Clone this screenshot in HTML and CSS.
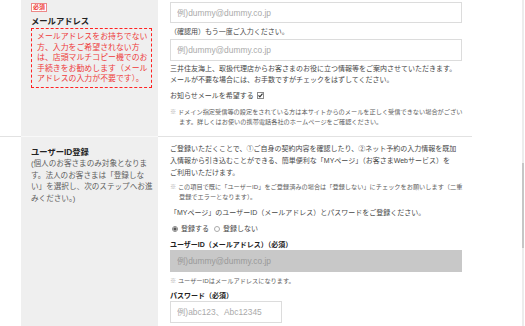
FILE: index.html
```html
<!DOCTYPE html>
<html lang="ja">
<head>
  <meta charset="UTF-8" />
  <title>お客さま情報入力</title>
  <link rel="stylesheet" href="styles.css">
</head>
<body>
  <div class="page">
    <div class="form">

      <div class="row row-mail">
        <div class="label-cell">
          <span class="badge">必須</span>
          <h2 class="label-title">メールアドレス</h2>
          <p class="alert">メールアドレスをお持ちでない<br>方、入力をご希望されない方<br>は、店頭マルチコピー機でのお<br>手続きをお勧めします（メール<br>アドレスの入力が不要です）。</p>
        </div>
        <div class="field-cell">
          <input class="text-input" type="text" placeholder="例)dummy@dummy.co.jp">
          <p class="sub-label">（確認用）もう一度ご入力ください。</p>
          <input class="text-input" type="text" placeholder="例)dummy@dummy.co.jp">
          <p class="text mail-info">三井住友海上、取扱代理店からお客さまのお役に立つ情報等をご案内させていただきます。<br>メールが不要な場合には、お手数ですがチェックをはずしてください。</p>
          <p class="text opt-in">お知らせメールを希望する
            <svg class="check" width="7" height="7" viewBox="0 0 7 7"><rect x=".5" y=".5" width="6" height="6" fill="#fff" stroke="#8a8a8a"/><path d="M1.5 3.4l1.4 1.5 2.6-3.2" fill="none" stroke="#333" stroke-width="1.2"/></svg>
          </p>
          <p class="note"><span class="mark">※</span> ドメイン指定受信等の設定をされている方は本サイトからのメールを正しく受信できない場合がござい<br>ます。詳しくはお使いの携帯電話各社のホームページをご確認ください。</p>
        </div>
      </div>

      <div class="row row-user">
        <div class="label-cell">
          <h2 class="label-title">ユーザーID登録</h2>
          <p class="label-desc">(個人のお客さまのみ対象となりま<br>す。法人のお客さまは「登録しな<br>い」を選択し、次のステップへお進<br>みください。)</p>
        </div>
        <div class="field-cell">
          <p class="text intro">ご登録いただくことで、①ご自身の契約内容を確認したり、②ネット予約の入力情報を既加<br>入情報から引き込むことができる、簡単便利な「MYページ」（お客さまWebサービス）を<br>ご利用いただけます。</p>
          <p class="note note-first"><span class="mark">※</span> この項目で既に「ユーザーID」をご登録済みの場合は「登録しない」にチェックをお願いします（二重<br>登録でエラーとなります）。</p>
          <p class="text lead">「MYページ」のユーザーID（メールアドレス）とパスワードをご登録ください。</p>
          <p class="text choice">
            <span class="radio on"></span>登録する
            <span class="radio"></span>登録しない
          </p>
          <h3 class="field-title">ユーザーID（メールアドレス）（必須）</h3>
          <input class="text-input is-disabled" type="text" placeholder="例)dummy@dummy.co.jp" disabled>
          <p class="note"><span class="mark">※</span> ユーザーIDはメールアドレスになります。</p>
          <h3 class="field-title">パスワード（必須）</h3>
          <input class="text-input is-short" type="password" placeholder="例)abc123、Abc12345">
        </div>
      </div>

    </div>
  </div>
  <div class="scrollbar"><div class="thumb"></div></div>
</body>
</html>
```

FILE: styles.css
```css
:root {
  --text: #474747;
  --sub: #5e5e5e;
  --red: #ee3b3b;
  --gray-bg: #efefef;
  --line: #e2e2e2;
}
* { box-sizing: border-box; margin: 0; padding: 0; }
body {
  font-family: "Liberation Sans", "Noto Sans CJK JP", sans-serif;
  color: var(--text);
  background: #fff;
  display: flex;
  height: 326px;
  overflow: hidden;
}
.page { flex: 1; }
.form { width: 472px; }
.row { display: flex; }
.row + .row { border-top: 1px solid var(--line); }
.label-cell {
  margin-left: 21px;
  width: 137px;
  flex-shrink: 0;
  background: var(--gray-bg);
  padding: 3px 5px 0 10px;
}
.row + .row .label-cell {
  margin-top: -1px;
  border-top: 1px solid #f8f8f8;
  padding-top: 9px;
}
.badge {
  display: block;
  width: fit-content;
  font-size: 6px;
  line-height: 7px;
  padding: 0 1px;
  color: var(--red);
  font-weight: 700;
  background: #fff;
  border: 1px solid #e88;
}
.label-title {
  font-size: 8.3px;
  line-height: 12px;
  font-weight: 700;
  color: #222;
  margin-top: 3px;
}
.row + .row .label-title { margin-top: 0; }
.alert {
  margin-top: 1px;
  width: 121px;
  border: 1px dashed #f22;
  padding: 3px 4px 2px 5px;
  font-size: 7.9px;
  line-height: 10.6px;
  color: var(--red);
  white-space: nowrap;
}
.label-desc {
  font-size: 7.6px;
  line-height: 11.7px;
  color: var(--sub);
  white-space: nowrap;
}
.field-cell {
  flex: 1;
  padding: 2px 10px 9px 12px;
}
.row-user .field-cell { padding-top: 6px; }
.text-input {
  display: block;
  width: 100%;
  height: 21px;
  border: 1px solid #dcdcdc;
  padding: 0 6px;
  font-family: inherit;
  font-size: 8.4px;
  background: #fff;
}
.text-input::placeholder { color: #aaa; }
.text-input + .sub-label + .text-input { height: 22px; }
.text-input.is-disabled {
  height: 22px;
  background: #c8c8c8;
  border-color: #c8c8c8;
}
.text-input.is-disabled::placeholder { color: #999; }
.text-input.is-short { width: 112px; height: 22px; }
.sub-label {
  font-size: 7px;
  line-height: 15px;
  padding-top: 1px;
  white-space: nowrap;
}
.text {
  font-size: 7px;
  line-height: 11px;
  white-space: nowrap;
}
.mail-info { margin-top: 2px; }
.opt-in { margin-top: 5px; display: flex; align-items: center; gap: 3px; }
.note {
  font-size: 6.2px;
  line-height: 10px;
  color: var(--sub);
  padding-left: 9px;
  text-indent: -9px;
  white-space: nowrap;
  margin-top: 6px;
}
.note .mark { color: #b0b0b0; }
.note-first { margin-top: 3px; }
.intro { line-height: 12px; }
.lead { margin-top: 5px; line-height: 12px; }
.choice {
  margin-top: 4px;
  line-height: 12px;
  display: flex;
  align-items: center;
  gap: 3px;
  padding-left: 2px;
}
.radio {
  display: inline-block;
  width: 6px;
  height: 6px;
  border-radius: 50%;
  border: 1px solid #aaa;
  background: #fff;
}
.radio.on { background: radial-gradient(circle, #555 0 1.4px, #fff 1.8px); border-color: #888; }
.choice .radio:nth-of-type(2) { margin-left: 2px; }
.field-title {
  font-size: 7px;
  line-height: 11px;
  font-weight: 700;
  color: #222;
  margin-top: 4px;
}
.is-disabled + .note { margin-top: 4px; }
.scrollbar {
  width: 2px;
  margin-right: 1px;
  background: #ececec;
}
.thumb {
  margin-top: 163px;
  height: 85px;
  background: #c6c6c6;
}
```
